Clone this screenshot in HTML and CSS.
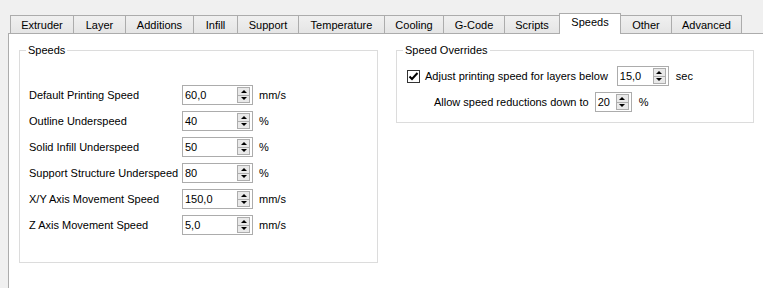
FILE: index.html
```html
<!DOCTYPE html>
<html>
<head>
<meta charset="utf-8">
<link rel="stylesheet" href="styles.css">
</head>
<body>
<div class="window">
  <div class="tabs">
    <div class="tab">Extruder</div>
    <div class="tab">Layer</div>
    <div class="tab">Additions</div>
    <div class="tab">Infill</div>
    <div class="tab">Support</div>
    <div class="tab">Temperature</div>
    <div class="tab">Cooling</div>
    <div class="tab">G-Code</div>
    <div class="tab">Scripts</div>
    <div class="tab active">Speeds</div>
    <div class="tab">Other</div>
    <div class="tab">Advanced</div>
  </div>
  <div class="pane">
    <fieldset class="group speeds">
      <legend>Speeds</legend>
      <div class="form">
        <span class="lbl">Default Printing Speed</span>
        <div class="spin"><span class="val">60,0</span><span class="btns"><span class="btn up"></span><span class="btn down"></span></span></div>
        <span class="unit">mm/s</span>

        <span class="lbl">Outline Underspeed</span>
        <div class="spin"><span class="val">40</span><span class="btns"><span class="btn up"></span><span class="btn down"></span></span></div>
        <span class="unit">%</span>

        <span class="lbl">Solid Infill Underspeed</span>
        <div class="spin"><span class="val">50</span><span class="btns"><span class="btn up"></span><span class="btn down"></span></span></div>
        <span class="unit">%</span>

        <span class="lbl">Support Structure Underspeed</span>
        <div class="spin"><span class="val">80</span><span class="btns"><span class="btn up"></span><span class="btn down"></span></span></div>
        <span class="unit">%</span>

        <span class="lbl">X/Y Axis Movement Speed</span>
        <div class="spin"><span class="val">150,0</span><span class="btns"><span class="btn up"></span><span class="btn down"></span></span></div>
        <span class="unit">mm/s</span>

        <span class="lbl">Z Axis Movement Speed</span>
        <div class="spin"><span class="val">5,0</span><span class="btns"><span class="btn up"></span><span class="btn down"></span></span></div>
        <span class="unit">mm/s</span>
      </div>
    </fieldset>
    <fieldset class="group overrides">
      <legend>Speed Overrides</legend>
      <div class="row row-check">
        <span class="check"><svg width="11" height="11" viewBox="0 0 11 11"><path d="M1.5 5.5 L4 8 L9.5 2" fill="none" stroke="#000" stroke-width="2"/></svg></span>
        <span class="check-lbl">Adjust printing speed for layers below</span>
        <div class="spin spin-sec"><span class="val">15,0</span><span class="btns"><span class="btn up"></span><span class="btn down"></span></span></div>
        <span class="unit">sec</span>
      </div>
      <div class="row row-min">
        <span>Allow speed reductions down to</span>
        <div class="spin spin-pct"><span class="val">20</span><span class="btns"><span class="btn up"></span><span class="btn down"></span></span></div>
        <span class="unit">%</span>
      </div>
    </fieldset>
  </div>
</div>
</body>
</html>
```

FILE: styles.css
```css
html, body {
  margin: 0;
  padding: 0;
  background: #f0f0f0;
  overflow: hidden;
}
body {
  font: 11px "Liberation Sans", Arial, sans-serif;
  color: #000;
  white-space: nowrap;
}
.window {
  padding: 13px 0 0 8px;
}
.tabs {
  display: grid;
  grid-template-columns: 63px 52px 68px 44px 61px 86px 59px 61px 55px 61px 51px 70px;
  align-items: end;
  height: 20px;
  margin-left: 2px;
  position: relative;
  z-index: 1;
}
.tab {
  height: 18px;
  box-sizing: border-box;
  border: 1px solid #acacac;
  border-bottom: 0;
  margin-right: -1px;
  background: linear-gradient(#f0f0f0, #e5e5e5);
  text-align: center;
  line-height: 18px;
}
.tab.active {
  height: 21px;
  margin-bottom: -1px;
  background: #fff;
  line-height: 17px;
}
.pane {
  border: 1px solid #acacac;
  border-bottom: 0;
  background: #fff;
  height: 255px;
  box-sizing: border-box;
  margin-right: -10px;
  padding: 10px 0 0 10px;
  display: flex;
  align-items: flex-start;
  gap: 18px;
}
.group {
  margin: 0;
  border: 1px solid #dcdcdc;
  padding: 0 0 0 6px;
  min-width: 0;
  box-sizing: border-box;
}
.group legend {
  padding: 0 2px;
  line-height: 13px;
}
.speeds {
  width: 359px;
  height: 219px;
}
.overrides {
  width: 358px;
  height: 79px;
}
.form {
  display: grid;
  grid-template-columns: 147px 71px auto;
  column-gap: 6px;
  row-gap: 6px;
  align-items: center;
  margin-top: 28px;
  padding-left: 3px;
}
.spin {
  height: 20px;
  box-sizing: border-box;
  border: 1px solid #acacac;
  background: #fff;
  display: flex;
  align-items: center;
}
.val {
  flex: 1;
  padding-left: 2px;
}
.btns {
  display: flex;
  flex-direction: column;
  width: 13px;
  height: 16px;
  margin-right: 2px;
  box-sizing: border-box;
  border: 1px solid #adadad;
  background: #e9e9e9;
}
.btn {
  flex: 1;
  display: flex;
  align-items: center;
  justify-content: center;
}
.btn.up {
  border-bottom: 1px solid #adadad;
}
.btn.up::before {
  content: "";
  border-left: 3px solid transparent;
  border-right: 3px solid transparent;
  border-bottom: 3px solid #000;
}
.btn.down::before {
  content: "";
  border-left: 3px solid transparent;
  border-right: 3px solid transparent;
  border-top: 3px solid #000;
}
.row {
  display: flex;
  align-items: center;
}
.row-check {
  margin-top: 9px;
  padding-left: 4px;
}
.check {
  width: 13px;
  height: 13px;
  box-sizing: border-box;
  border: 1px solid #333;
  background: #fff;
  display: flex;
  align-items: center;
  justify-content: center;
}
.check-lbl {
  margin-left: 5px;
  margin-right: 9px;
}
.spin-sec {
  width: 52px;
}
.spin-pct {
  width: 37px;
  margin-left: 6px;
}
.row .unit {
  margin-left: 7px;
}
.row-min {
  margin-top: 6px;
  padding-left: 31px;
}
```
